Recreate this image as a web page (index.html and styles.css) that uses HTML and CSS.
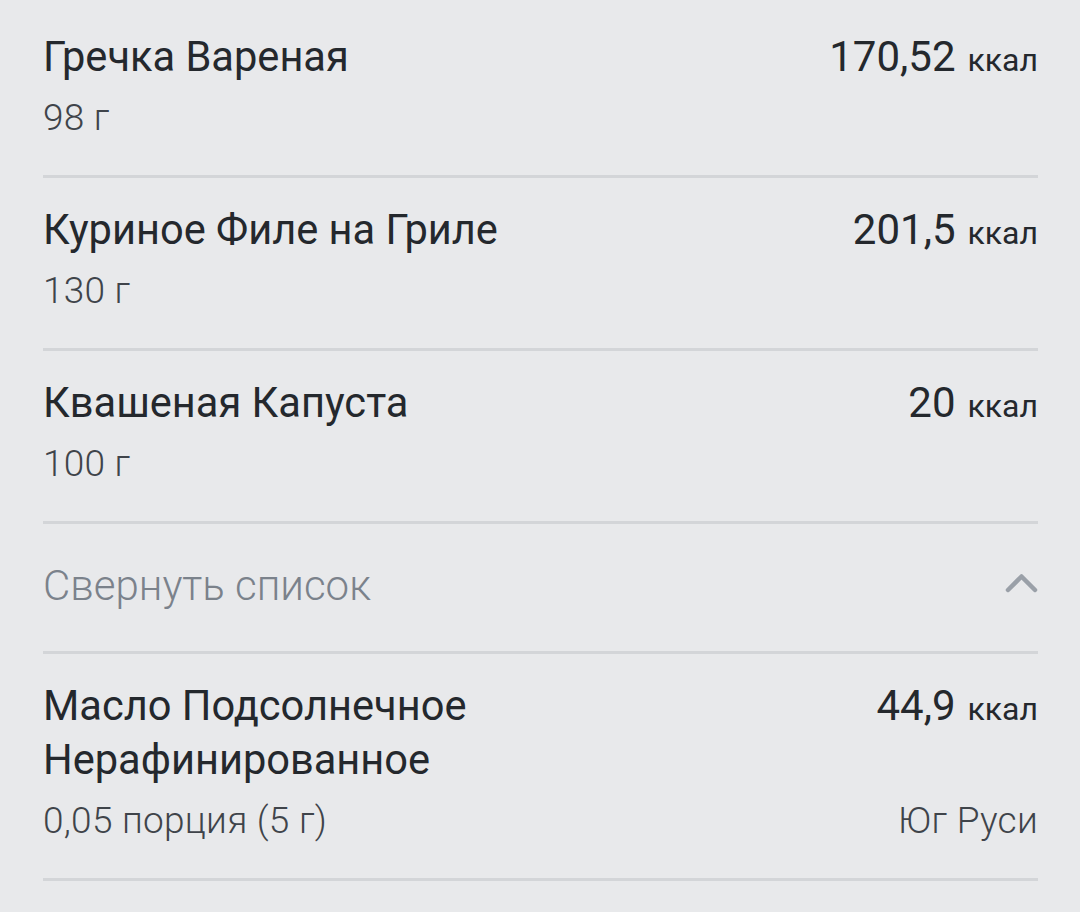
FILE: index.html
```html
<!DOCTYPE html>
<html lang="ru">
<head>
<meta charset="utf-8">
<link rel="stylesheet" href="styles.css">
</head>
<body>
<div class="list">
  <div class="item">
    <div class="title">Гречка Вареная</div>
    <div class="kcal"><span class="num">170,52</span><span class="unit">ккал</span></div>
    <div class="sub">98 г</div>
  </div>
  <div class="item">
    <div class="title">Куриное Филе на Гриле</div>
    <div class="kcal"><span class="num">201,5</span><span class="unit">ккал</span></div>
    <div class="sub">130 г</div>
  </div>
  <div class="item">
    <div class="title">Квашеная Капуста</div>
    <div class="kcal"><span class="num">20</span><span class="unit">ккал</span></div>
    <div class="sub">100 г</div>
  </div>
  <div class="collapse">
    <span class="collapse-text">Свернуть список</span>
    <svg class="chev" width="33" height="22" viewBox="0 0 33 22"><path d="M3 18 L16.5 4.5 L30 18" fill="none" stroke="#9aa0a8" stroke-width="4.5" stroke-linecap="round" stroke-linejoin="round"/></svg>
  </div>
  <div class="item">
    <div class="title">Масло Подсолнечное Нерафинированное</div>
    <div class="kcal"><span class="num">44,9</span><span class="unit">ккал</span></div>
    <div class="sub">0,05 порция (5 г)</div>
    <div class="brand">Юг Руси</div>
  </div>
</div>
</body>
</html>
```
FILE: styles.css
```css
html, body {
  margin: 0;
  padding: 0;
  background: #e8e9eb;
}
body {
  font-family: Roboto, "Noto Sans", sans-serif;
  color: #24282d;
  width: 1080px;
  height: 912px;
  overflow: hidden;
}
.list {
  padding: 2px 42px 0 43px;
}
.item {
  display: grid;
  grid-template-columns: 1fr auto;
  column-gap: 40px;
  border-top: 3px solid #d3d5d8;
  padding: 25px 0 35px;
}
.item:first-child {
  border-top-color: transparent;
}
.title {
  font-size: 41.6px;
  line-height: 54px;
  font-weight: 400;
  max-width: 600px;
  grid-column: 1;
  grid-row: 1;
}
.kcal {
  grid-column: 2;
  grid-row: 1;
  text-align: right;
  font-size: 42px;
  line-height: 54px;
  white-space: nowrap;
}
.num {
  font-weight: 400;
}
.unit {
  font-size: 32px;
  line-height: 1;
  font-weight: 400;
  margin-left: 12px;
}
.sub,
.brand {
  grid-row: 2;
  font-size: 37px;
  line-height: 44px;
  font-weight: 300;
  letter-spacing: 0.25px;
  color: #3f444a;
  margin-top: 12px;
}
.sub {
  grid-column: 1;
}
.brand {
  grid-column: 2;
  text-align: right;
}
.collapse {
  display: flex;
  align-items: center;
  justify-content: space-between;
  border-top: 3px solid #d3d5d8;
  height: 127px;
}
.collapse-text {
  font-size: 42px;
  line-height: 50px;
  font-weight: 300;
  color: #7b828b;
  margin-top: -4px;
}
.chev {
  margin-right: 0;
  margin-top: -10px;
}
.list > :last-child {
  border-bottom: 3px solid #d3d5d8;
}
```
